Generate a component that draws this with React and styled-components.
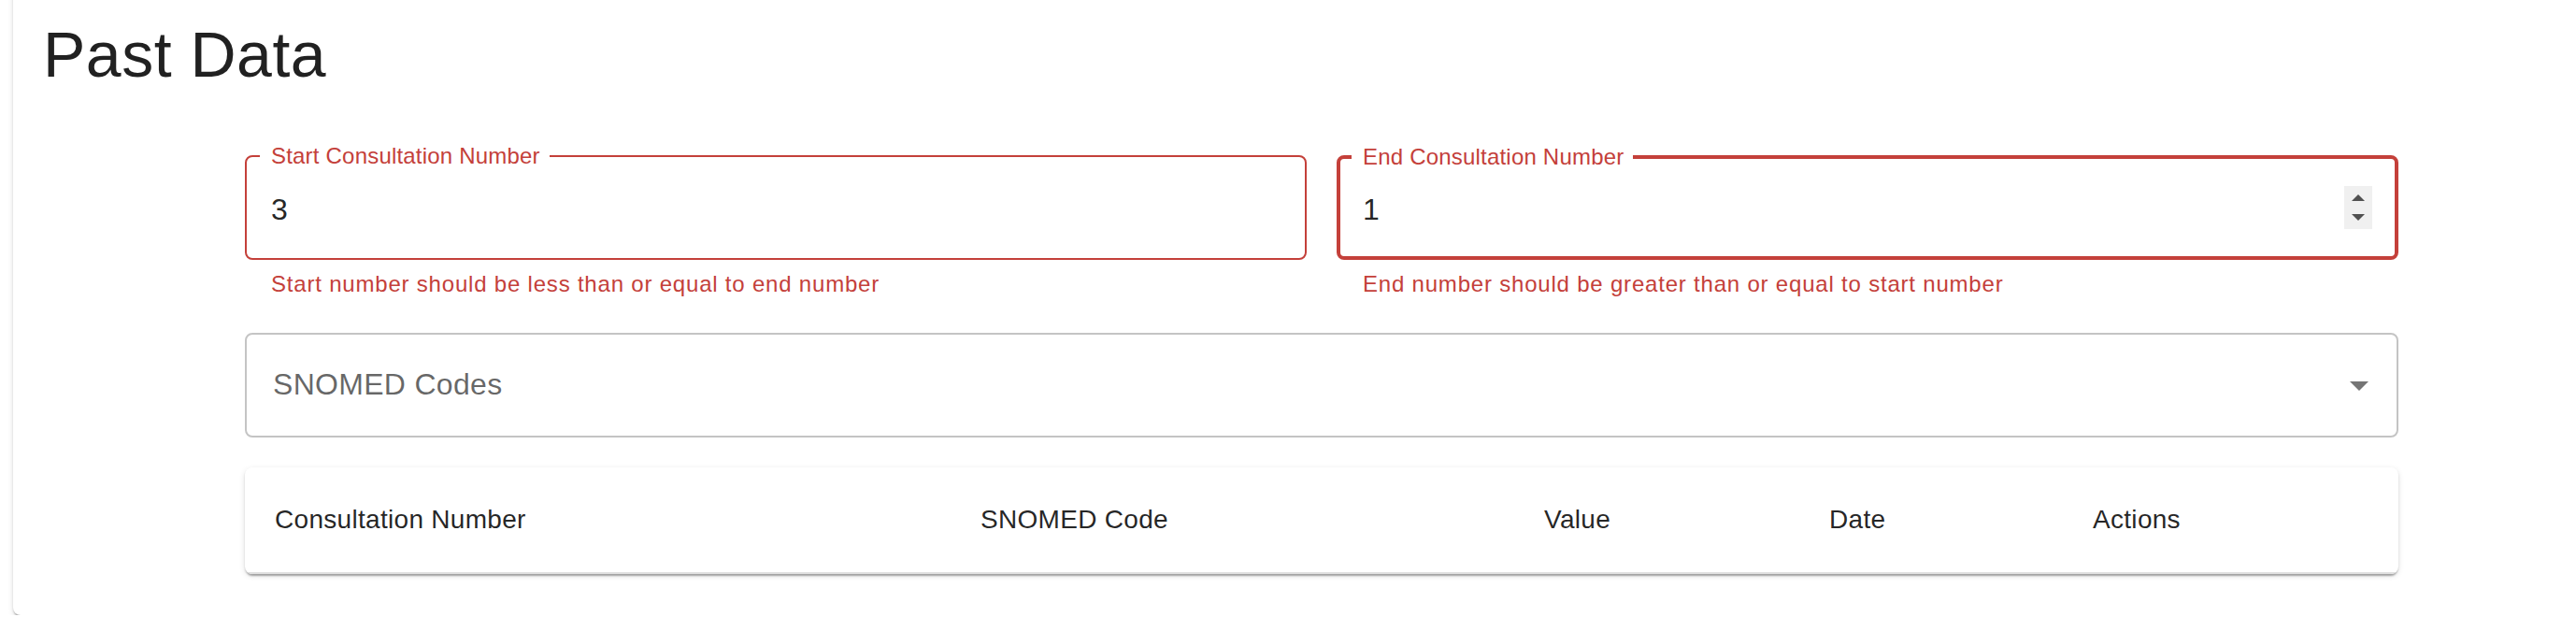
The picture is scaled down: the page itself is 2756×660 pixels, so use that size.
import React from 'react';
import styled, {createGlobalStyle} from 'styled-components';

const RED = '#c4403a';

const GlobalStyle = createGlobalStyle`
  html, body {
    margin: 0;
    padding: 0;
    background: #fff;
    overflow: hidden;
  }
  body {
    font-family: "Liberation Sans", Arial, Helvetica, sans-serif;
    color: rgba(0, 0, 0, 0.87);
  }
  * {
    box-sizing: border-box;
  }
`

const columns = [
    {label: 'Consultation Number', width: 755},
    {label: 'SNOMED Code', width: 603},
    {label: 'Value', width: 305},
    {label: 'Date', width: 282},
    {label: 'Actions', width: 359},
];

const NumberField = ({label, value, helper, border, spinner}) => (
    <FieldColumn>
        <Outline $border={border}>
            <Legend>{label}</Legend>
            <InputRow $border={border}>
                <NumberInput type="text" value={value} readOnly/>
                {spinner && (
                    <Spinner>
                        <svg width="30" height="46" viewBox="0 0 30 46">
                            <polygon points="8,16 15,9 22,16" fill="#505050"/>
                            <polygon points="8,30 22,30 15,37" fill="#505050"/>
                        </svg>
                    </Spinner>
                )}
            </InputRow>
        </Outline>
        <HelperText>{helper}</HelperText>
    </FieldColumn>
)

export default function App() {
    return (
        <>
            <GlobalStyle/>
            <Panel>
                <Title>Past Data</Title>
                <Content>
                    <FieldRow>
                        <NumberField
                            label="Start Consultation Number"
                            value="3"
                            border={2}
                            helper="Start number should be less than or equal to end number"
                        />
                        <NumberField
                            label="End Consultation Number"
                            value="1"
                            border={4}
                            spinner
                            helper="End number should be greater than or equal to start number"
                        />
                    </FieldRow>
                    <SelectBox>
                        <Placeholder>SNOMED Codes</Placeholder>
                        <svg width="48" height="48" viewBox="0 0 48 48">
                            <path d="M14 20 L24 30 L34 20 Z" fill="rgba(0,0,0,0.54)"/>
                        </svg>
                    </SelectBox>
                    <TablePaper>
                        <Table>
                            <thead>
                            <tr>
                                {columns.map(c => (
                                    <HeadCell key={c.label} $width={c.width}>{c.label}</HeadCell>
                                ))}
                            </tr>
                            </thead>
                        </Table>
                    </TablePaper>
                </Content>
            </Panel>
        </>
    )
}

const Panel = styled.div`
  margin: -16px -40px 0 14px;
  height: 674px;
  padding: 32px 32px 0;
  background: #fff;
  border-radius: 8px;
  box-shadow: 0 4px 2px -2px rgba(0, 0, 0, 0.2),
  0 2px 2px 0 rgba(0, 0, 0, 0.14),
  0 2px 6px 0 rgba(0, 0, 0, 0.12);
`
const Title = styled.h1`
  margin: 0;
  font-size: 68px;
  line-height: 84px;
  font-weight: 400;
  letter-spacing: 0.5px;
  color: rgba(0, 0, 0, 0.87);
`
const Content = styled.div`
  width: 2304px;
  margin: 50px 0 0 216px;
  display: flex;
  flex-direction: column;
  gap: 32px;
`
const FieldRow = styled.div`
  display: grid;
  grid-template-columns: 1fr 1fr;
  column-gap: 32px;
  align-items: start;
`
const FieldColumn = styled.div`
  display: flex;
  flex-direction: column;
  min-width: 0;
`
const Outline = styled.fieldset`
  margin: ${p => (p.$border - 2) / 2}px 0 0;
  padding: 0 ${p => 28 - p.$border}px 0 ${p => 16 - p.$border}px;
  border: ${p => p.$border}px solid ${RED};
  border-radius: 8px;
  min-width: 0;
`
const Legend = styled.legend`
  padding: 0 10px 0 12px;
  font-size: 24px;
  line-height: 34px;
  letter-spacing: 0.2px;
  color: ${RED};
`
const InputRow = styled.div`
  display: flex;
  align-items: center;
  height: ${p => 46 + 18 - p.$border / 2 + 31 - p.$border}px;
  padding: ${p => 18 - p.$border / 2}px 0 ${p => 31 - p.$border}px 12px;
`
const NumberInput = styled.input`
  flex: 1;
  min-width: 0;
  height: 46px;
  margin: 0;
  padding: 0;
  border: 0;
  outline: none;
  background: transparent;
  font-family: inherit;
  font-size: 32px;
  line-height: 46px;
  letter-spacing: 0.3px;
  color: rgba(0, 0, 0, 0.87);
`
const Spinner = styled.div`
  flex-shrink: 0;
  display: flex;
  width: 30px;
  height: 46px;
  margin-top: -4px;
  background: #f0f0f0;
`
const HelperText = styled.p`
  margin: 6px 28px 0;
  font-size: 24px;
  line-height: 40px;
  letter-spacing: 0.8px;
  color: ${RED};
`
const SelectBox = styled.div`
  display: flex;
  align-items: center;
  height: 112px;
  padding: 0 16px 0 28px;
  border: 2px solid rgba(0, 0, 0, 0.23);
  border-radius: 8px;
`
const Placeholder = styled.span`
  flex: 1;
  margin-bottom: 2px;
  font-size: 32px;
  line-height: 46px;
  letter-spacing: 0.3px;
  color: rgba(0, 0, 0, 0.6);
`
const TablePaper = styled.div`
  background: #fff;
  border-radius: 8px;
  overflow: hidden;
  box-shadow: 0 4px 2px -2px rgba(0, 0, 0, 0.2),
  0 2px 2px 0 rgba(0, 0, 0, 0.14),
  0 2px 6px 0 rgba(0, 0, 0, 0.12);
`
const Table = styled.table`
  width: 100%;
  border-collapse: collapse;
  table-layout: fixed;
`
const HeadCell = styled.th`
  width: ${p => p.$width}px;
  padding: 32px;
  text-align: left;
  font-weight: 400;
  font-size: 28px;
  line-height: 48px;
  letter-spacing: 0.3px;
  color: rgba(0, 0, 0, 0.87);
  border-bottom: 2px solid #e0e0e0;
`
